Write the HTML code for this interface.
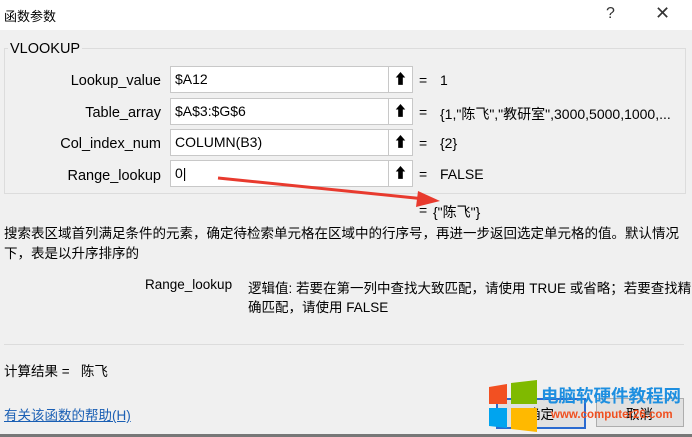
<!DOCTYPE html>
<html><head><meta charset="utf-8"><style>
body{margin:0;width:692px;height:437px;background:#f0f0f0;font-family:"Liberation Sans","Noto Sans CJK SC",sans-serif;font-size:14px;color:#000;position:relative;overflow:hidden}
.a{position:absolute;white-space:nowrap}
.title{top:0;left:0;width:692px;height:30px;background:#fff}
.fs{left:4px;top:48px;width:680px;height:144px;border:1px solid #dcdcdc}
.lbl{right:531px;font-size:14.5px}
.inp{left:170px;width:241px;height:25px;background:#fff;border:1px solid #c8c8c8}
.inp span{position:absolute;left:4px;top:4px}
.btn{position:absolute;right:0;top:0;width:23px;height:25px;border-left:1px solid #c8c8c8;background:#fff;font-weight:bold;text-align:center;line-height:25px}
.eq{left:419px}
.res{left:440px}
</style></head><body>
<div class="a title"></div>
<div class="a" style="left:4px;top:6px;font-size:13px">函数参数</div>
<div class="a" style="top:5px;font-size:16px;color:#333;left:606px">?</div>
<div class="a" style="left:655px;top:3px;font-size:18px;color:#333">✕</div>
<div class="a fs"></div>
<div class="a" style="left:8px;top:41px;background:#f0f0f0;padding:0 2px;font-size:14.5px">VLOOKUP</div>

<div class="a lbl" style="top:73px">Lookup_value</div>
<div class="a inp" style="top:66px"><span>$A12</span><div class="btn">⬆</div></div>
<div class="a eq" style="top:72px">=</div><div class="a res" style="top:72px">1</div>

<div class="a lbl" style="top:105px">Table_array</div>
<div class="a inp" style="top:98px"><span>$A$3:$G$6</span><div class="btn">⬆</div></div>
<div class="a eq" style="top:104px">=</div><div class="a res" style="top:104px">{1,"陈飞","教研室",3000,5000,1000,...</div>

<div class="a lbl" style="top:136px">Col_index_num</div>
<div class="a inp" style="top:129px"><span>COLUMN(B3)</span><div class="btn">⬆</div></div>
<div class="a eq" style="top:135px">=</div><div class="a res" style="top:135px">{2}</div>

<div class="a lbl" style="top:168px">Range_lookup</div>
<div class="a inp" style="top:160px"><span>0|</span><div class="btn">⬆</div></div>
<div class="a eq" style="top:166px">=</div><div class="a res" style="top:166px">FALSE</div>

<svg class="a" style="left:0;top:0" width="692" height="437"><line x1="218" y1="178" x2="425" y2="199" stroke="#e83a2e" stroke-width="3"/><polygon points="440,201 418,191 416,207" fill="#e83a2e"/></svg>

<div class="a" style="left:419px;top:202px">=</div><div class="a" style="left:433px;top:202px">{"陈飞"}</div>
<div class="a" style="left:4px;top:222px;font-size:13.5px">搜索表区域首列满足条件的元素，确定待检索单元格在区域中的行序号，再进一步返回选定单元格的值。默认情况</div>
<div class="a" style="left:4px;top:242px;font-size:13.5px">下，表是以升序排序的</div>
<div class="a" style="left:145px;top:277px;font-size:13.5px">Range_lookup</div>
<div class="a" style="left:248px;top:277px;font-size:13.5px">逻辑值: 若要在第一列中查找大致匹配，请使用 TRUE 或省略；若要查找精</div>
<div class="a" style="left:248px;top:296px;font-size:13.5px">确匹配，请使用 FALSE</div>
<div class="a" style="left:4px;top:344px;width:680px;height:1px;background:#dcdcdc"></div>
<div class="a" style="left:4px;top:360px;font-size:13.5px">计算结果 =&nbsp;&nbsp;&nbsp;陈飞</div>
<div class="a" style="left:4px;top:404px;font-size:13.5px;color:#1a5fb4;text-decoration:underline">有关该函数的帮助(H)</div>
<div class="a" style="left:496px;top:398px;width:86px;height:27px;border:2px solid #2a6ad0;background:#e1e1e1"></div>
<div class="a" style="left:527px;top:403px;font-size:13.5px">确定</div>
<div class="a" style="left:596px;top:398px;width:86px;height:27px;border:1px solid #adadad;background:#e1e1e1"></div>
<div class="a" style="left:626px;top:403px;font-size:13.5px">取消</div>
<svg class="a" style="left:487px;top:380px" width="52" height="52"><polygon points="2,7 20,4 20,24 2,24" fill="#f25022"/><polygon points="24,3 50,0 50,24 24,24" fill="#7fba00"/><polygon points="2,28 20,28 20,48 2,46" fill="#00a4ef"/><polygon points="24,28 50,28 50,52 24,49" fill="#ffb900"/></svg>
<div class="a" style="left:541px;top:383px;font-size:17.5px;font-weight:bold;color:#1e8fe0">电脑软硬件教程网</div>
<div class="a" style="left:551px;top:409px;font-size:11.5px;font-weight:bold;color:#f05020">www.computer26.com</div>
<div class="a" style="left:0;top:434px;width:692px;height:3px;background:#777"></div>
</body></html>
